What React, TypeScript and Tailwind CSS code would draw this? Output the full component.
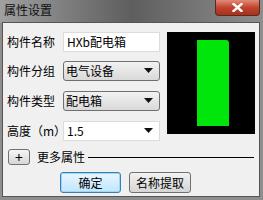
const font = { fontFamily: '"Noto Sans CJK SC", "Liberation Sans", sans-serif' };

function Arrow() {
  return (
    <svg width="9" height="5" viewBox="0 0 9 5" className="shrink-0">
      <path d="M0 0 H9 L4.5 5 Z" fill="#111" />
    </svg>
  );
}

function Label({ children }: { children: React.ReactNode }) {
  return <div className="w-[56px] shrink-0 text-[12px] leading-[14px] text-black">{children}</div>;
}

function Select({ value }: { value: string }) {
  return (
    <div className="flex h-[20px] w-[97px] items-center justify-between rounded-[3px] border border-[#707070] bg-gradient-to-b from-[#f2f2f2] to-[#d9d9d9] pl-[2px] pr-[6px] text-[12px] text-black">
      <span>{value}</span>
      <Arrow />
    </div>
  );
}

export default function App() {
  return (
    <div className="relative h-[200px] w-[263px] overflow-hidden bg-[#8e8e8e]" style={font}>
      {/* title bar */}
      <div className="flex h-[23px] items-start justify-between bg-gradient-to-r from-[#a0a0a0] via-[#5e5e5e] to-[#8e8e8e]">
        <div className="pl-[4px] pt-[3px] text-[12px] leading-[14px] text-[#111]">属性设置</div>
        <div className="mr-[3px] flex h-[16px] w-[45px] items-center justify-center rounded-b-[4px] border border-t-0 border-[#5a2a22] bg-gradient-to-b from-[#e08a78] via-[#c0432e] to-[#a8301c]">
          <svg width="11" height="9" viewBox="0 0 11 9">
            <path d="M1.5 1 L9.5 8 M9.5 1 L1.5 8" stroke="#fff" strokeWidth="2.4" strokeLinecap="square" />
          </svg>
        </div>
      </div>

      {/* client area */}
      <div className="absolute left-[2px] right-[3px] top-[22px] bottom-[3px] border border-[#555] bg-[#f0f0f0]">
        <div className="flex">
          <div className="flex flex-col pl-[4px] pt-[8px]">
            <div className="flex h-[21px] items-center">
              <Label>构件名称</Label>
              <div className="flex h-[20px] w-[97px] items-center border border-[#dcdcdc] bg-white pl-[3px] text-[12px] text-black">
                HXb配电箱
              </div>
            </div>
            <div className="mt-[8px] flex h-[21px] items-center">
              <Label>构件分组</Label>
              <Select value="电气设备" />
            </div>
            <div className="mt-[9px] flex h-[21px] items-center">
              <Label>构件类型</Label>
              <Select value="配电箱" />
            </div>
            <div className="mt-[9px] flex h-[21px] items-center">
              <Label>高度（m）</Label>
              <div className="flex h-[20px] w-[97px] items-center justify-between border border-[#dcdcdc] bg-white pl-[3px] pr-[6px] text-[12px] text-black">
                <span>1.5</span>
                <Arrow />
              </div>
            </div>
          </div>
          <div className="ml-[7px] mt-[9px] flex h-[102px] w-[88px] justify-center bg-black pt-[8px]">
            <div className="ml-[3px] h-[86px] w-[32px] rounded-tr-[3px] bg-[#00e60a]" />
          </div>
        </div>

        <div className="mt-[8px] flex items-center pl-[5px] pr-[5px]">
          <div className="flex h-[16px] w-[22px] items-center justify-center rounded-[3px] border border-[#707070] bg-gradient-to-b from-[#f6f6f6] to-[#d6d6d6] text-[14px] leading-none text-black">
            +
          </div>
          <span className="ml-[7px] text-[12px] leading-[14px] text-black">更多属性</span>
          <div className="ml-[3px] h-px flex-1 bg-black" />
        </div>

        <div className="mt-[7px] flex pl-[57px]">
          <div className="flex h-[21px] w-[61px] items-center justify-center rounded-[3px] border border-[#3c7fb1] bg-gradient-to-b from-[#eaf6fd] to-[#bee6fd] text-[12px] text-black shadow-[inset_0_0_0_1px_#9fd5f5]">
            确定
          </div>
          <div className="ml-[8px] flex h-[21px] w-[62px] items-center justify-center rounded-[3px] border border-[#707070] bg-gradient-to-b from-[#f2f2f2] to-[#d5d5d5] text-[12px] text-black">
            名称提取
          </div>
        </div>
      </div>
    </div>
  );
}
